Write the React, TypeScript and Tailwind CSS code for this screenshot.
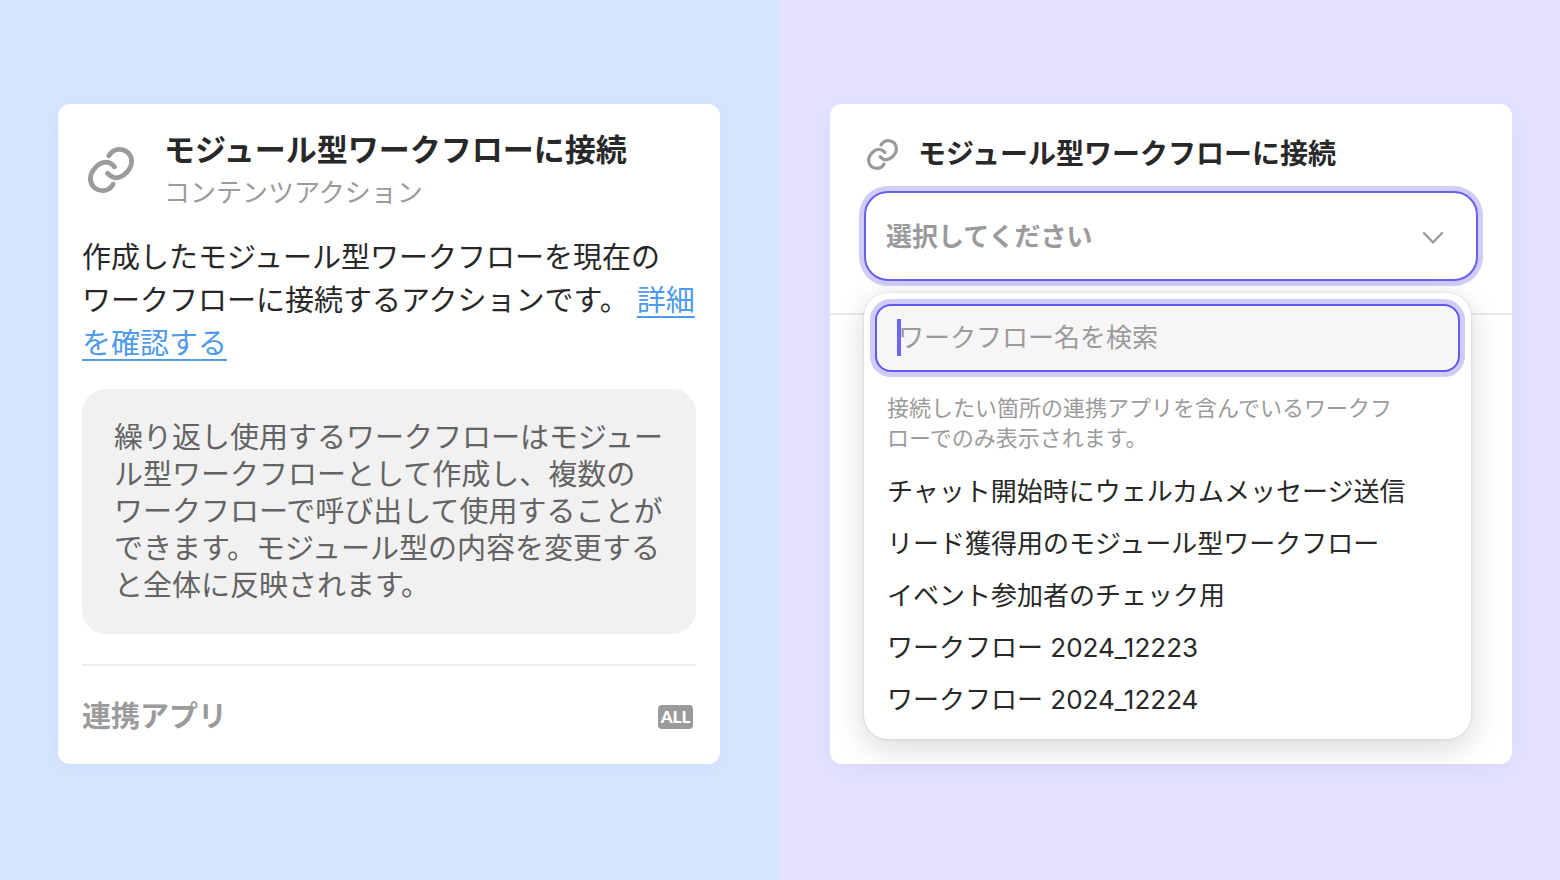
import React, { useState } from 'react';

const workflows = [
  'チャット開始時にウェルカムメッセージ送信',
  'リード獲得用のモジュール型ワークフロー',
  'イベント参加者のチェック用',
  'ワークフロー 2024_12223',
  'ワークフロー 2024_12224',
];

const LinkIcon = ({ className }: { className: string }) => (
  <svg viewBox="0 0 46 46" fill="none" stroke="currentColor" strokeWidth="4.8" strokeLinecap="round" className={className} aria-hidden="true">
    <path d="M20.8 8.8C23 5 27 2.4 31.5 2.4C38.5 2.4 43.6 7.5 43.6 14.5C43.6 22 35.5 30.8 28 30.8C24.5 30.8 22 29 19.5 26.2" />
    <path d="M25.2 37.2C23 41 19 43.6 14.5 43.6C7.5 43.6 2.4 38.5 2.4 31.5C2.4 24 10.5 15.2 18 15.2C21.5 15.2 24 17 26.5 19.8" />
  </svg>
);

const ActionCard = () => (
  <article className="flex-1 min-w-0 bg-white rounded-xl px-6 pt-7 pb-6 shadow-[0_4px_24px_rgba(60,80,200,0.06)]">
    <header className="flex items-start gap-[30px] pl-1.5">
      <LinkIcon className="w-[46px] h-[46px] mt-[15px] shrink-0 text-[#9b9b9b]" />
      <div>
        <h2 className="text-[31px] leading-9 font-bold whitespace-nowrap">モジュール型ワークフローに接続</h2>
        <p className="text-[26px] leading-[50px] text-[#9b9b9b]">コンテンツアクション</p>
      </div>
    </header>

    <p className="mt-[18px] text-[29px] leading-[43px] whitespace-nowrap">
      作成したモジュール型ワークフローを現在の
      <br />
      ワークフローに接続するアクションです。{' '}
      <a href="#" className="text-[#4f9aec] underline decoration-2 underline-offset-[5px]">
        詳細
        <br />
        を確認する
      </a>
    </p>

    <div className="mt-6 rounded-3xl bg-[#f1f1f1] px-8 py-[30px] text-[29px] leading-[37px] whitespace-nowrap text-[#636363]">
      繰り返し使用するワークフローはモジュー
      <br />
      ル型ワークフローとして作成し、複数の
      <br />
      ワークフローで呼び出して使用することが
      <br />
      できます。モジュール型の内容を変更する
      <br />
      と全体に反映されます。
    </div>

    <footer className="mt-[30px] pt-7 border-t-2 border-[#ededed] flex items-center justify-between">
      <span className="text-[29px] leading-[46px] font-bold text-[#9b9b9b]">連携アプリ</span>
      <span className="mr-[3px] w-[35px] h-6 rounded bg-[#9b9b9b] flex items-center justify-center font-['Lato',sans-serif] text-[17px] leading-6 font-black text-white">
        ALL
      </span>
    </footer>
  </article>
);

const ConnectCard = () => {
  const [open, setOpen] = useState(true);
  const [query, setQuery] = useState('');

  return (
    <section className="flex-1 min-w-0 bg-white rounded-xl shadow-[0_4px_24px_rgba(60,80,200,0.06)]">
      <div className="pt-[29px] pb-8 px-[34px] border-b-2 border-[#ebebeb]">
        <div className="flex items-center gap-5 pl-[3px]">
          <LinkIcon className="w-[31px] h-[31px] shrink-0 text-[#9b9b9b]" />
          <h2 id="connect-title" className="text-[28px] leading-[42px] font-bold whitespace-nowrap">
            モジュール型ワークフローに接続
          </h2>
        </div>

        <div className="relative mt-4">
          <button
            type="button"
            aria-haspopup="listbox"
            aria-expanded={open}
            aria-describedby="connect-title"
            onClick={() => setOpen(!open)}
            className="w-full h-[90px] pl-5 pr-8 flex items-center justify-between rounded-3xl border-2 border-[#6761ee] bg-white ring-[5px] ring-[#d0cdfb] text-[26px] font-bold text-[#9b9b9b]"
          >
            選択してください
            <svg viewBox="0 0 22 14" fill="none" stroke="currentColor" strokeWidth="2.4" strokeLinecap="round" strokeLinejoin="round" className="w-[22px] h-[14px] mt-1" aria-hidden="true">
              <path d="M2 2L11 11.5L20 2" />
            </svg>
          </button>

          {open && (
            <div className="absolute left-0 right-[7px] top-full mt-3 rounded-3xl bg-white px-[11px] pt-[11px] pb-[13px] shadow-[0_0_3px_rgba(0,0,0,0.14),0_8px_32px_rgba(0,0,0,0.16)]">
              <div className="relative">
                <input
                  type="text"
                  aria-label="ワークフロー名を検索"
                  placeholder="ワークフロー名を検索"
                  value={query}
                  onChange={(e) => setQuery(e.target.value)}
                  className="block w-full h-[68px] px-[21px] pb-0.5 rounded-2xl border-2 border-[#6059f0] bg-[#f6f6f6] ring-[5px] ring-[#cfcbfb] outline-none text-[26px] placeholder:text-[#9b9b9b]"
                />
                <span className="absolute left-[22px] top-[15px] w-1 h-[37px] bg-[#6b66ff]" />
              </div>

              <p className="mt-[21px] px-3 text-[22px] leading-[30px] whitespace-nowrap text-[#9b9b9b]">
                接続したい箇所の連携アプリを含んでいるワークフ
                <br />
                ローでのみ表示されます。
              </p>

              <ul role="listbox" aria-label="ワークフロー" className="mt-[13px]">
                {workflows
                  .filter((name) => name.includes(query))
                  .map((name) => (
                    <li key={name} role="option" aria-selected={false} className="px-3 text-[26px] leading-[52px] whitespace-nowrap cursor-pointer">
                      {name}
                    </li>
                  ))}
              </ul>
            </div>
          )}
        </div>
      </div>
    </section>
  );
};

const App = () => {
  return (
    <main className="min-h-screen grid grid-cols-2 font-['Inter','Noto_Sans_CJK_JP',sans-serif] text-[#282828]">
      <div className="flex bg-[#d7e5ff] pt-26 pb-29 pl-[58px] pr-[60px]">
        <ActionCard />
      </div>
      <div className="flex bg-[#e4e2ff] pt-26 pb-29 pl-[50px] pr-12">
        <ConnectCard />
      </div>
    </main>
  );
};

export default App;
